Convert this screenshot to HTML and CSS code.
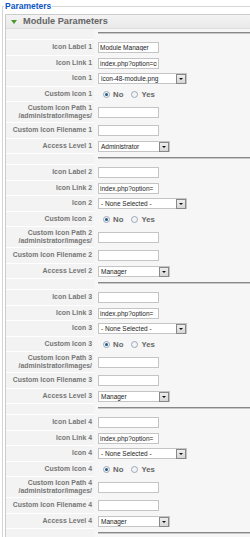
FILE: index.html
```html
<!DOCTYPE html>
<html>
<head>
  <meta http-equiv="content-type" content="text/html; charset=UTF-8">
  <title>Module Parameters</title>
  <link rel="stylesheet" href="styles.css">
</head>
<body>
<fieldset class="adminform">
  <legend>Parameters</legend>
  <div class="pane">
    <h3 class="pane-toggler"><span class="arrow"></span>Module Parameters</h3>
    <div class="paramlist">

      <div class="row spacer"><div class="key"></div><div class="val"><div class="rule"></div></div></div>
      <div class="row"><div class="key">Icon Label 1</div><div class="val"><input class="text" type="text" value="Module Manager"></div></div>
      <div class="row"><div class="key">Icon Link 1</div><div class="val"><input class="text" type="text" value="index.php?option=com_modules"></div></div>
      <div class="row"><div class="key">Icon 1</div><div class="val"><span class="select wide"><span>icon-48-module.png</span></span></div></div>
      <div class="row"><div class="key">Custom Icon 1</div><div class="val"><span class="radio on"></span><span class="opt">No</span><span class="radio"></span><span class="opt">Yes</span></div></div>
      <div class="row tall"><div class="key">Custom Icon Path 1<br>/administrator/images/</div><div class="val"><input class="text" type="text" value=""></div></div>
      <div class="row"><div class="key">Custom Icon Filename 1</div><div class="val"><input class="text" type="text" value=""></div></div>
      <div class="row"><div class="key">Access Level 1</div><div class="val"><span class="select"><span>Administrator</span></span></div></div>

      <div class="row spacer"><div class="key"></div><div class="val"><div class="rule"></div></div></div>
      <div class="row"><div class="key">Icon Label 2</div><div class="val"><input class="text" type="text" value=""></div></div>
      <div class="row"><div class="key">Icon Link 2</div><div class="val"><input class="text" type="text" value="index.php?option="></div></div>
      <div class="row"><div class="key">Icon 2</div><div class="val"><span class="select wide"><span>- None Selected -</span></span></div></div>
      <div class="row"><div class="key">Custom Icon 2</div><div class="val"><span class="radio on"></span><span class="opt">No</span><span class="radio"></span><span class="opt">Yes</span></div></div>
      <div class="row tall"><div class="key">Custom Icon Path 2<br>/administrator/images/</div><div class="val"><input class="text" type="text" value=""></div></div>
      <div class="row"><div class="key">Custom Icon Filename 2</div><div class="val"><input class="text" type="text" value=""></div></div>
      <div class="row"><div class="key">Access Level 2</div><div class="val"><span class="select"><span>Manager</span></span></div></div>

      <div class="row spacer"><div class="key"></div><div class="val"><div class="rule"></div></div></div>
      <div class="row"><div class="key">Icon Label 3</div><div class="val"><input class="text" type="text" value=""></div></div>
      <div class="row"><div class="key">Icon Link 3</div><div class="val"><input class="text" type="text" value="index.php?option="></div></div>
      <div class="row"><div class="key">Icon 3</div><div class="val"><span class="select wide"><span>- None Selected -</span></span></div></div>
      <div class="row"><div class="key">Custom Icon 3</div><div class="val"><span class="radio on"></span><span class="opt">No</span><span class="radio"></span><span class="opt">Yes</span></div></div>
      <div class="row tall"><div class="key">Custom Icon Path 3<br>/administrator/images/</div><div class="val"><input class="text" type="text" value=""></div></div>
      <div class="row"><div class="key">Custom Icon Filename 3</div><div class="val"><input class="text" type="text" value=""></div></div>
      <div class="row"><div class="key">Access Level 3</div><div class="val"><span class="select"><span>Manager</span></span></div></div>

      <div class="row spacer"><div class="key"></div><div class="val"><div class="rule"></div></div></div>
      <div class="row"><div class="key">Icon Label 4</div><div class="val"><input class="text" type="text" value=""></div></div>
      <div class="row"><div class="key">Icon Link 4</div><div class="val"><input class="text" type="text" value="index.php?option="></div></div>
      <div class="row"><div class="key">Icon 4</div><div class="val"><span class="select wide"><span>- None Selected -</span></span></div></div>
      <div class="row"><div class="key">Custom Icon 4</div><div class="val"><span class="radio on"></span><span class="opt">No</span><span class="radio"></span><span class="opt">Yes</span></div></div>
      <div class="row tall"><div class="key">Custom Icon Path 4<br>/administrator/images/</div><div class="val"><input class="text" type="text" value=""></div></div>
      <div class="row"><div class="key">Custom Icon Filename 4</div><div class="val"><input class="text" type="text" value=""></div></div>
      <div class="row"><div class="key">Access Level 4</div><div class="val"><span class="select"><span>Manager</span></span></div></div>

      <div class="row spacer"><div class="key"></div><div class="val"><div class="rule"></div></div></div>
    </div>
  </div>
</fieldset>
</body>
</html>
```

FILE: styles.css
```css
body {
	margin: 0px;
	padding: 0px;
	background-color: white;
	overflow: hidden;
	font-family: "Liberation Sans", Arial, sans-serif;
}
fieldset.adminform {
	width: 300px;
	margin: 1px 0 0 2px;
	padding: 0 0 0 2px;
	border: 1px solid #d5d5d5;
	border-right: none;
}
legend {
	margin-left: -1px;
	padding: 0 1px;
	font-size: 8.5px;
	line-height: 11px;
	font-weight: bold;
	color: #0b55c4;
}
.pane {
	margin-top: 2px;
	border: 1px solid #ccc;
	border-right: none;
	background: #f6f6f6;
}
.pane-toggler {
	margin: 0;
	height: 13px;
	line-height: 13px;
	padding-left: 4px;
	font-size: 9.2px;
	font-weight: bold;
	color: #666;
	background: linear-gradient(#f3f3f3, #e9e9e9);
	border-bottom: 1px solid #ddd;
	display: flex;
	align-items: center;
}
.arrow {
	width: 0; height: 0;
	border-left: 3px solid transparent;
	border-right: 3px solid transparent;
	border-top: 4px solid #4a9a2a;
	margin: 0 6px 0 1px;
}
.row { display: flex; height: 15.5px; }
.row.tall { height: 21px; }
.row.spacer { height: 11px; }
.key {
	width: 86px;
	flex: none;
	padding-right: 2px;
	text-align: right;
	white-space: nowrap;
	font-size: 6.9px;
	line-height: 8.5px;
	font-weight: bold;
	color: #767676;
	background: #f3f3f3;
	border-bottom: 1px solid #fff;
	display: flex;
	align-items: center;
	justify-content: flex-end;
}
.val {
	flex: 1;
	padding-left: 4px;
	display: flex;
	align-items: center;
}
.spacer .val { align-items: flex-start; }
.rule {
	width: 100%;
	margin-top: 3px;
	border-top: 1px solid #888;
	border-bottom: 1px solid #c8c8c8;
}
input.text {
	width: 61px;
	height: 11px;
	box-sizing: border-box;
	margin: 0;
	padding: 0 1px;
	border: 1px solid #c4c4c4;
	background: #fff;
	font-family: "Liberation Sans", Arial, sans-serif;
	font-size: 6.5px;
	color: #222;
	outline: none;
}
.select {
	position: relative;
	width: 72px;
	height: 11px;
	box-sizing: border-box;
	border: 1px solid #c4c4c4;
	background: #fff;
	font-size: 6.5px;
	line-height: 9px;
	color: #222;
	padding-left: 2px;
}
.select.wide { width: 89px; }
.select::after {
	content: "";
	position: absolute;
	right: 0; top: 0;
	width: 8px; height: 8px;
	border: 1px solid #888;
	background: linear-gradient(#eee, #d6d6d6);
}
.select::before {
	content: "";
	position: absolute;
	right: 3px; top: 4px;
	z-index: 1;
	border-left: 2px solid transparent;
	border-right: 2px solid transparent;
	border-top: 2px solid #111;
}
.radio {
	width: 5px; height: 5px;
	border: 1px solid #9aa8b8;
	border-radius: 50%;
	background: #f4f4f4;
	margin-left: 5px;
	position: relative;
}
.radio.on::after {
	content: "";
	position: absolute;
	left: 1px; top: 1px;
	width: 3px; height: 3px;
	border-radius: 50%;
	background: #1d5a8a;
}
.opt {
	font-size: 7.8px;
	font-weight: bold;
	color: #666;
	margin-left: 3px;
	margin-right: 3px;
}
```
